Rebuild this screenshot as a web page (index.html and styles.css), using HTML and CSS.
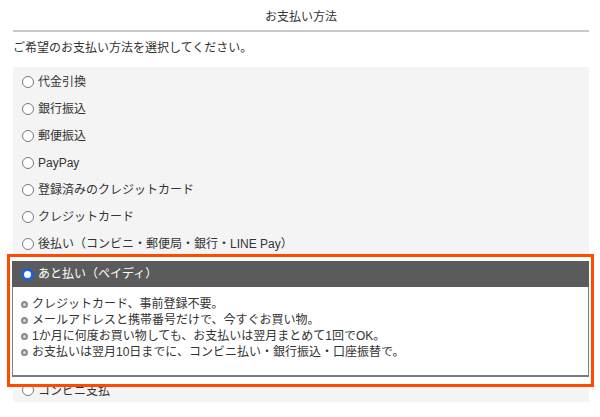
FILE: index.html
```html
<!DOCTYPE html>
<html lang="ja">
<head>
<meta charset="utf-8">
<title>お支払い方法</title>
<link rel="stylesheet" href="styles.css">
</head>
<body>
<div class="page">
  <h1 class="title">お支払い方法</h1>
  <p class="intro">ご希望のお支払い方法を選択してください。</p>
  <ul class="methods">
    <li class="method"><span class="radio"></span><span>代金引換</span></li>
    <li class="method"><span class="radio"></span><span>銀行振込</span></li>
    <li class="method"><span class="radio"></span><span>郵便振込</span></li>
    <li class="method"><span class="radio"></span><span>PayPay</span></li>
    <li class="method"><span class="radio"></span><span>登録済みのクレジットカード</span></li>
    <li class="method"><span class="radio"></span><span>クレジットカード</span></li>
    <li class="method"><span class="radio"></span><span>後払い（コンビニ・郵便局・銀行・LINE Pay）</span></li>
    <li class="selected">
      <div class="sel-box">
        <div class="sel-head"><span class="radio radio-on"></span><span>あと払い（ペイディ）</span></div>
        <ul class="sel-body">
          <li class="point"><span class="dot"></span><span>クレジットカード、事前登録不要。</span></li>
          <li class="point"><span class="dot"></span><span>メールアドレスと携帯番号だけで、今すぐお買い物。</span></li>
          <li class="point"><span class="dot"></span><span>1か月に何度お買い物しても、お支払いは翌月まとめて1回でOK。</span></li>
          <li class="point"><span class="dot"></span><span>お支払いは翌月10日までに、コンビニ払い・銀行振込・口座振替で。</span></li>
        </ul>
      </div>
    </li>
    <li class="method method-last"><span class="radio"></span><span>コンビニ支払</span></li>
  </ul>
</div>
</body>
</html>
```

FILE: styles.css
```css
* { box-sizing: border-box; }
html, body { margin: 0; padding: 0; background: #fff; }
body {
  font-family: "Liberation Sans", "Noto Sans CJK JP", sans-serif;
  font-size: 12px;
  color: #333;
}
.page {
  width: 576px;
  margin-left: 13px;
}
.title {
  margin: 0;
  padding: 10px 0 6px;
  font-size: 12px;
  font-weight: normal;
  line-height: 14px;
  text-align: center;
  border-bottom: 2px solid #c8c8c8;
}
.intro {
  margin: 0;
  padding: 9px 0 12px;
  line-height: 14px;
}
.methods {
  list-style: none;
  margin: 0;
  padding: 1px 0 0;
  background: #f4f4f4;
}
.method {
  height: 27px;
  padding-left: 9px;
  display: flex;
  align-items: center;
  gap: 4px;
  line-height: 14px;
}
.method-last {
  height: 18px;
  align-items: flex-start;
  padding-top: 0;
}
.radio {
  width: 12px;
  height: 12px;
  border-radius: 50%;
  border: 1px solid #7a7a7a;
  background: #fff;
  flex: none;
}
.radio-on {
  width: 13px;
  height: 13px;
  border: 3px solid #1f5fd8;
  background: #fff;
}
.selected {
  position: relative;
  z-index: 1;
  margin: 0 -2px 0 -3px;
  padding: 4px 2px 7px 2px;
  background: #fff;
  outline: 3px solid #ff4b00;
}
.sel-box {
  display: flex;
  flex-direction: column;
}
.sel-head {
  height: 26px;
  background: #5b5b5b;
  color: #fff;
  display: flex;
  align-items: center;
  gap: 4px;
  padding-left: 9px;
  line-height: 14px;
}
.sel-body {
  list-style: none;
  margin: 0;
  padding: 9px 0 15px 8px;
  border: 1px solid #808080;
  border-top: none;
  border-bottom: 2px solid #7a7a7a;
}
.point {
  height: 16px;
  display: flex;
  align-items: center;
  gap: 4px;
  line-height: 16px;
}
.dot {
  width: 7px;
  height: 7px;
  border-radius: 50%;
  background: #d8d8d8;
  border: 2px solid #8a8a8a;
  flex: none;
}
```
